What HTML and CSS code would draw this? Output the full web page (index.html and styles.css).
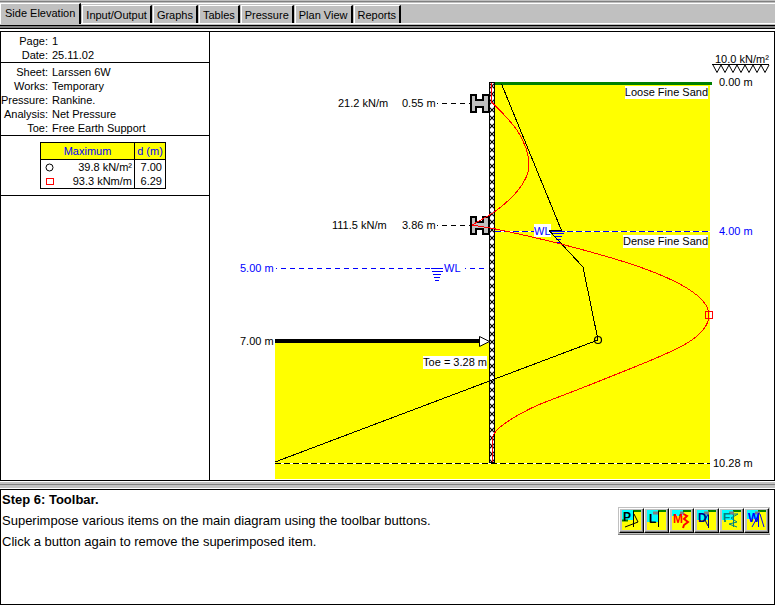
FILE: index.html
```html
<!DOCTYPE html>
<html lang="en">
<head>
<meta charset="utf-8">
<title>Side Elevation</title>
<link rel="stylesheet" href="styles.css">
</head>
<body>
<nav class="tabs" role="tablist">
  <button class="tab tab-active" role="tab" aria-selected="true">Side Elevation</button>
  <button class="tab" role="tab">Input/Output</button>
  <button class="tab" role="tab">Graphs</button>
  <button class="tab" role="tab">Tables</button>
  <button class="tab" role="tab">Pressure</button>
  <button class="tab" role="tab">Plan View</button>
  <button class="tab" role="tab">Reports</button>
</nav>
<main class="sheet">
  <aside class="info">
    <dl class="facts">
      <dt>Page:</dt><dd>1</dd>
      <dt>Date:</dt><dd>25.11.02</dd>
    </dl>
    <dl class="facts">
      <dt>Sheet:</dt><dd>Larssen 6W</dd>
      <dt>Works:</dt><dd>Temporary</dd>
      <dt>Pressure:</dt><dd>Rankine.</dd>
      <dt>Analysis:</dt><dd>Net Pressure</dd>
      <dt>Toe:</dt><dd>Free Earth Support</dd>
    </dl>
    <div class="summary">
      <table class="maxima">
        <thead><tr><th colspan="2">Maximum</th><th>d (m)</th></tr></thead>
        <tbody>
          <tr><td class="key"><svg width="9" height="9"><circle cx="4.500" cy="4.500" r="3.500" fill="none" stroke="#000"/></svg></td><td class="value">39.8 kN/m²</td><td class="depth">7.00</td></tr>
          <tr><td class="key"><svg width="9" height="9"><rect x="1.500" y="1.500" width="7" height="6" fill="none" stroke="#f00"/></svg></td><td class="value">93.3 kNm/m</td><td class="depth">6.29</td></tr>
        </tbody>
      </table>
    </div>
  </aside>
  <svg class="diagram" viewBox="210 32 564 448" role="img" aria-label="Side elevation of the sheet pile wall">
    <defs>
      <pattern id="hatch" x="488" y="370" width="8" height="8" patternUnits="userSpaceOnUse">
        <rect width="8" height="8" fill="#fff"/>
        <path d="M0 0L8 8M8 0L0 8" stroke="#000" stroke-width="1.200"/>
      </pattern>
      <path id="beam" d="M471 95H476V100H483V95H489V112H483V107H476V112H471Z" fill="#c0c0c0" stroke="#000" stroke-width="2"/>
    </defs>
    <!-- soil -->
    <rect x="495" y="85" width="215" height="394" fill="#ff0"/>
    <rect x="275" y="343" width="220" height="136" fill="#ff0"/>
    <rect x="495" y="82" width="217" height="3" fill="#008000"/>
    <rect x="275" y="339" width="205" height="4"/>
    <!-- levels -->
    <path d="M495 231.500H711M275 463.500H710" stroke="#fff"/>
    <path d="M495 231.500H711" stroke="#00f" stroke-dasharray="6 3"/>
    <path d="M275 463.500H710" stroke="#000" stroke-dasharray="6 3"/>
    <path d="M276 268.500H431M465 268.500H487" stroke="#00f" stroke-dasharray="5 4" stroke-dashoffset="4"/>
    <path d="M437 103.500H470M437 225.500H470" stroke="#000" stroke-dasharray="5 4" stroke-dashoffset="4"/>
    <!-- wall and props -->
    <rect x="489.500" y="82.500" width="5" height="380" fill="url(#hatch)" stroke="#000"/>
    <use href="#beam"/>
    <use href="#beam" y="122"/>
    <path d="M479.500 336.500L489.500 341.500L479.500 346.500Z" fill="#fff" stroke="#000"/>
    <!-- labels -->
    <g fill="#fff">
      <rect x="625" y="86" width="83" height="13"/>
      <rect x="623" y="235" width="85" height="13"/>
      <rect x="423" y="356" width="64" height="13"/>
      <rect x="534" y="224" width="17" height="13"/>
    </g>
    <g class="label">
      <text x="338" y="107">21.2 kN/m</text>
      <text x="402" y="107">0.55 m</text>
      <text x="332" y="229">111.5 kN/m</text>
      <text x="402" y="229">3.86 m</text>
      <text x="240" y="345">7.00 m</text>
      <text x="487" y="366" text-anchor="end">Toe = 3.28 m</text>
      <text x="708" y="96" text-anchor="end">Loose Fine Sand</text>
      <text x="708" y="245" text-anchor="end">Dense Fine Sand</text>
      <text x="715" y="63">10.0 kN/m²</text>
      <text x="719" y="86">0.00 m</text>
      <text x="713" y="467">10.28 m</text>
    </g>
    <g class="label label-water">
      <text x="719" y="235">4.00 m</text>
      <text x="240" y="272">5.00 m</text>
      <text x="444" y="272">WL</text>
      <text x="534" y="235">WL</text>
    </g>
    <path d="M431 268.500H443M432 271.500H443M433 274.500H441M434 277.500H440M435 280.500H439M551 231.500H565M553 233.500H564M554 236.500H562M556 239.500H561M557 242.500H560" stroke="#00f"/>
    <!-- surcharge -->
    <path d="M712 64.500H769M713 65L717 72.500L721 65L725 72.500L729 65L733 72.500L737 65L741 72.500L745 65L749 72.500L753 65L757 72.500L761 65L765 72.500L769 65" fill="none" stroke="#000"/>
    <!-- net pressure -->
    <path class="curve" d="M501.500 84L561.500 230.500L549.500 231L583 267L598 340L275 462" fill="none" stroke="#000"/>
    <circle cx="598" cy="340" r="3.500" fill="none" stroke="#000" stroke-width="1.200"/>
    <!-- bending moment -->
    <path class="curve" d="M491.500 83V102C503 113 511 122 517 130C524 141 529 152 529 165C529 184 507 203 493 213L472 225L493 228.500C535 237 579 248 620 260.500C660 273 709 292 709 315C709 338 672 352 627 370L587 386L543 403C530 408 520 414 513 418C504 424 493 431 492.500 438V462" fill="none" stroke="#f00"/>
    <rect x="705.500" y="311.500" width="7" height="7" fill="none" stroke="#f00"/>
  </svg>
</main>
<div class="splitter"></div>
<section class="help">
  <div class="help-text">
    <h1>Step 6: Toolbar.</h1>
    <p>Superimpose various items on the main diagram using the toolbar buttons.</p>
    <p>Click a button again to remove the superimposed item.</p>
  </div>
  <div class="toolbar" role="toolbar">
    <button class="tool" aria-label="Pressure"><svg viewBox="0 0 19 20"><path d="M0 0H19V20H0Z" fill="#ff0"/><path d="M0 0H11V10H0Z" fill="#0ff"/><path d="M11 1H19M0 10.500H6" stroke="#008000" stroke-width="2"/><path d="M11.500 1V17M12 4L16 12L3 17" fill="none" stroke="#000"/><text x="1" y="11" fill="#000">P</text></svg></button>
    <button class="tool" aria-label="Loads"><svg viewBox="0 0 19 20"><path d="M0 0H19V20H0Z" fill="#ff0"/><path d="M0 0H11V12H0Z" fill="#0ff"/><path d="M11 1H19" stroke="#008000" stroke-width="2"/><path d="M11.500 1V17" stroke="#000"/><path d="M6 3H11" stroke="#808080" stroke-width="3"/><text x="2" y="13" fill="#000">L</text></svg></button>
    <button class="tool" aria-label="Moment"><svg viewBox="0 0 19 20"><path d="M0 0H19V20H0Z" fill="#ff0"/><path d="M0 0H11V6H0Z" fill="#0ff"/><path d="M8 3H12" stroke="#808080" stroke-width="3"/><path d="M11 1H19" stroke="#008000" stroke-width="2"/><path d="M11.500 4L15 6L12 9L16 12L12 15L11 18" fill="none" stroke="#f00" stroke-width="2"/><text x="1" y="13" fill="#f00">M</text></svg></button>
    <button class="tool" aria-label="Deflection"><svg viewBox="0 0 19 20"><path d="M0 0H19V20H0Z" fill="#ff0"/><path d="M0 0H11V10H0Z" fill="#0ff"/><path d="M11 1H19" stroke="#008000" stroke-width="2"/><path d="M11.500 2V18M11 4L8 10L11 16" fill="none" stroke="#000080"/><path d="M7 3H12" stroke="#808080" stroke-width="3"/><text x="1" y="12" fill="#000080">D</text></svg></button>
    <button class="tool" aria-label="Shear force"><svg viewBox="0 0 19 20"><path d="M0 0H19V20H0Z" fill="#ff0"/><path d="M0 0H11V10H0Z" fill="#0ff"/><path d="M11 1H19" stroke="#008000" stroke-width="2"/><path d="M10 4H16L9 8L15 12L7 14L15 17M11.500 2V17" fill="none" stroke="#008080"/><path d="M7 3H12" stroke="#808080" stroke-width="3"/><text x="1" y="12" fill="#008080">F</text></svg></button>
    <button class="tool" aria-label="Water"><svg viewBox="0 0 19 20"><path d="M0 0H19V20H0Z" fill="#ff0"/><path d="M0 0H11V9H0Z" fill="#0ff"/><path d="M11 1H19" stroke="#008000" stroke-width="2"/><path d="M11.500 4V17M11 6L5 17M13 4L17 17" fill="none" stroke="#00f"/><path d="M8 3H13" stroke="#808080" stroke-width="3"/><text x="1" y="12" fill="#00f">W</text></svg></button>
  </div>
</section>
</body>
</html>
```
FILE: styles.css
```css
* { box-sizing: border-box; }

body {
  margin: 0;
  min-height: 100vh;
  display: flex;
  flex-direction: column;
  background: #fff;
  color: #000;
  font: 11px/14px "Liberation Sans", Arial, sans-serif;
}

button {
  margin: 0;
  font: inherit;
  color: inherit;
}

.tabs {
  display: flex;
  align-items: flex-end;
  gap: 1px;
  height: 31px;
  padding-bottom: 8px;
  background: linear-gradient(#c0c0c0 1px, #808080 1px 2px, #c0c0c0 2px 3px, #fff 3px 4px, #c0c0c0 4px 23px, #fff 23px 24px, #c0c0c0 24px 25px, #000 25px 26px, #808080 26px 28px, #000 28px 29px, #fff 29px);
}

.tab {
  height: 18px;
  padding: 1px 3px 0;
  border: 1px solid #000;
  border-color: #fff #000 transparent #fff;
  border-right-width: 2px;
  border-bottom: 0;
  background: #c0c0c0;
  line-height: 16px;
  white-space: nowrap;
}

.tab-active {
  align-self: flex-start;
  height: 21px;
  margin-top: 3px;
  padding: 1px 4px 3px 4px;
}

.sheet {
  display: grid;
  grid-template-columns: 210fr 564fr;
  border: 1px solid #000;
  border-left: 0;
}

.info {
  border: solid #000;
  border-width: 0 1px;
}

.facts {
  display: grid;
  grid-template-columns: 47px 1fr;
  column-gap: 4px;
  margin: 0;
  padding-top: 2px;
  border-bottom: 1px solid #000;
}

.facts dt { text-align: right; white-space: nowrap; justify-self: end; }
.facts dd { margin: 0; }

.summary {
  padding: 6px 0;
  padding-left: 39px;
  border-bottom: 1px solid #000;
}

.maxima {
  width: 126px;
  border-collapse: collapse;
  border: 1px solid #000;
}

.maxima th {
  height: 17px;
  padding: 0;
  border: 1px solid #000;
  background: #ff0;
  color: #00f;
  font-weight: normal;
}

.maxima td { padding: 0; }
.maxima .key { width: 20px; padding-left: 4px; }
.maxima .key svg { display: block; }
.maxima .value { text-align: right; padding-right: 2px; }
.maxima .depth { width: 31px; padding-right: 3px; text-align: right; border-left: 1px solid #000; }

.diagram {
  display: block;
  width: 100%;
}

.curve { shape-rendering: crispEdges; }

.label { font-size: 11px; }
.label-water { fill: #00f; }

.splitter {
  height: 8px;
  background: linear-gradient(#fff 1px, #c0c0c0 1px 3px, #808080 3px 4px, #c0c0c0 4px 7px, #fff 7px);
}

.help {
  flex: 1;
  display: flex;
  justify-content: space-between;
  align-items: flex-start;
  border: 1px solid #000;
}

.help-text { padding: 0 0 0 1px; }

.help h1,
.help p {
  margin: 0;
  font-size: 13px;
  line-height: 21px;
}

.help h1 { line-height: 20px; }

.toolbar {
  display: flex;
  margin: 17px 4px 0 0;
  padding: 1px;
  background: #c0c0c0;
  border-bottom: 1px solid #808080;
}

.tool {
  width: 25px;
  height: 25px;
  padding: 1px 2px 2px;
  border: 1px solid #000;
  border-top-color: #fff;
  border-left-color: #fff;
  background: #c0c0c0;
  box-shadow: inset -1px -1px #808080;
}

.tool svg {
  display: block;
  width: 19px;
  height: 20px;
  overflow: visible;
}

.tool text {
  font: bold 12px "Liberation Sans", Arial, sans-serif;
}
```
